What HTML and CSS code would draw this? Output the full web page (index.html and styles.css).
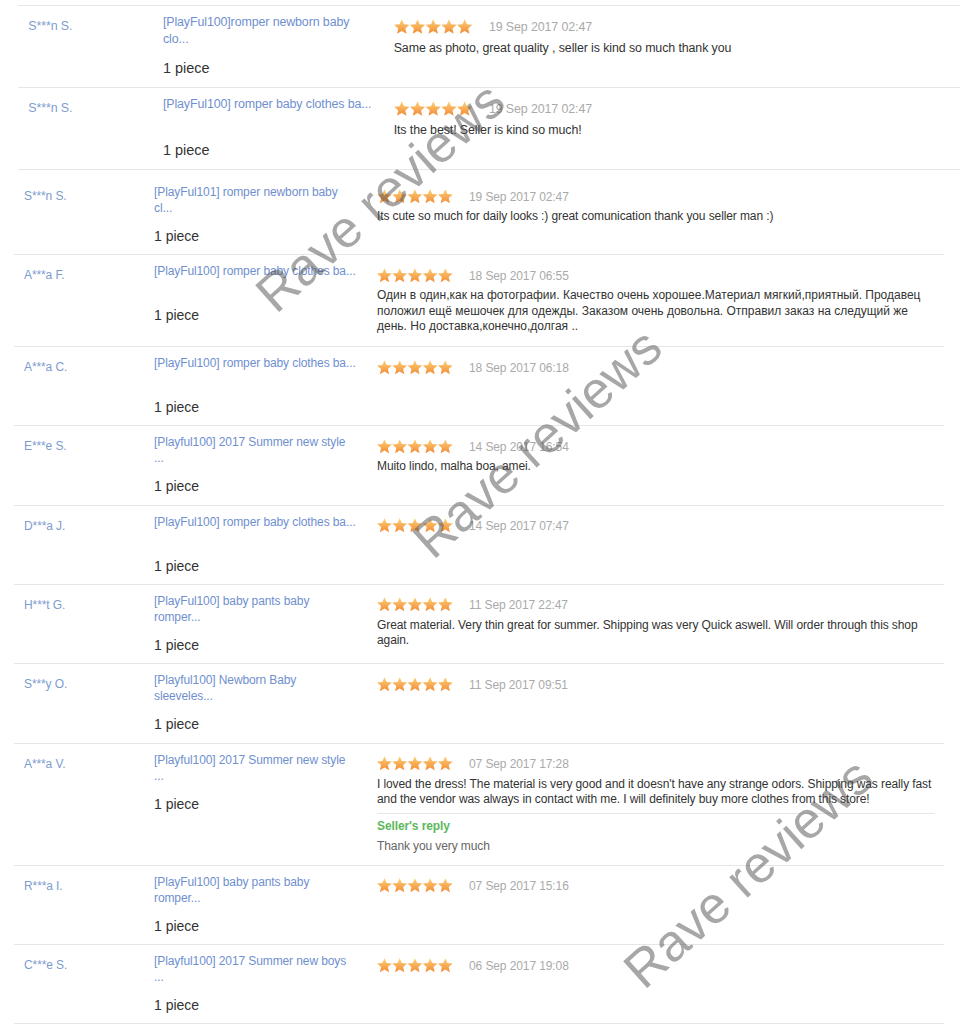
FILE: index.html
```html
<!DOCTYPE html>
<html lang="en">
  <head>
    <meta charset="UTF-8" />
    <title>Feedback</title>
    <link rel="stylesheet" href="styles.css">
  </head>
  <body>
    <svg class="defs" width="0" height="0">
      <defs>
        <linearGradient id="starFill" x1="0" y1="0" x2="0" y2="1">
          <stop offset="0" stop-color="#fdd27a" />
          <stop offset="1" stop-color="#f28b34" />
        </linearGradient>
        <path id="star" d="M7.5 0.2 L9.62 5.09 L14.92 5.59 L10.92 9.11 L12.08 14.31 L7.5 11.6 L2.92 14.31 L4.08 9.11 L0.08 5.59 L5.38 5.09 Z" fill="url(#starFill)" />
        <symbol id="stars5" viewBox="0 0 76 15">
          <use href="#star" x="0" />
          <use href="#star" x="15.2" />
          <use href="#star" x="30.4" />
          <use href="#star" x="45.6" />
          <use href="#star" x="60.8" />
        </symbol>
      </defs>
    </svg>

    <div class="page">
      <!-- first capture -->
      <div class="shot shot--top">
        <div class="feedback feedback--zoomed">
          <div class="fb-row">
            <div class="fb-user">S***n S.</div>
            <div class="fb-order">
              <a class="fb-product" href="#">[PlayFul100]romper newborn baby clo...</a>
              <div class="fb-qty">1 piece</div>
            </div>
            <div class="fb-review">
              <div class="fb-meta">
                <svg class="fb-stars"><use href="#stars5" /></svg>
                <span class="fb-date">19 Sep 2017 02:47</span>
              </div>
              <p class="fb-text">Same as photo, great quality , seller is kind so much thank you</p>
            </div>
          </div>
          <div class="fb-row">
            <div class="fb-user">S***n S.</div>
            <div class="fb-order">
              <a class="fb-product" href="#">[PlayFul100] romper baby clothes ba...</a>
              <div class="fb-qty">1 piece</div>
            </div>
            <div class="fb-review">
              <div class="fb-meta">
                <svg class="fb-stars"><use href="#stars5" /></svg>
                <span class="fb-date">19 Sep 2017 02:47</span>
              </div>
              <p class="fb-text">Its the best! Seller is kind so much!</p>
            </div>
          </div>
        </div>
      </div>

      <!-- second capture -->
      <div class="shot shot--bottom">
        <div class="feedback">
          <div class="fb-row">
            <div class="fb-user">S***n S.</div>
            <div class="fb-order">
              <a class="fb-product" href="#">[PlayFul101] romper newborn baby cl...</a>
              <div class="fb-qty">1 piece</div>
            </div>
            <div class="fb-review">
              <div class="fb-meta">
                <svg class="fb-stars"><use href="#stars5" /></svg>
                <span class="fb-date">19 Sep 2017 02:47</span>
              </div>
              <p class="fb-text">Its cute so much for daily looks :) great comunication thank you seller man :)</p>
            </div>
          </div>
          <div class="fb-row">
            <div class="fb-user">A***a F.</div>
            <div class="fb-order">
              <a class="fb-product" href="#">[PlayFul100] romper baby clothes ba...</a>
              <div class="fb-qty">1 piece</div>
            </div>
            <div class="fb-review">
              <div class="fb-meta">
                <svg class="fb-stars"><use href="#stars5" /></svg>
                <span class="fb-date">18 Sep 2017 06:55</span>
              </div>
              <p class="fb-text" lang="ru">Один в один,как на фотографии. Качество очень хорошее.Материал мягкий,приятный. Продавец положил ещё мешочек для одежды. Заказом очень довольна. Отправил заказ на следущий же день. Но доставка,конечно,долгая ..</p>
            </div>
          </div>
          <div class="fb-row">
            <div class="fb-user">A***a C.</div>
            <div class="fb-order">
              <a class="fb-product" href="#">[PlayFul100] romper baby clothes ba...</a>
              <div class="fb-qty">1 piece</div>
            </div>
            <div class="fb-review">
              <div class="fb-meta">
                <svg class="fb-stars"><use href="#stars5" /></svg>
                <span class="fb-date">18 Sep 2017 06:18</span>
              </div>
            </div>
          </div>
          <div class="fb-row">
            <div class="fb-user">E***e S.</div>
            <div class="fb-order">
              <a class="fb-product" href="#">[Playful100] 2017 Summer new style ...</a>
              <div class="fb-qty">1 piece</div>
            </div>
            <div class="fb-review">
              <div class="fb-meta">
                <svg class="fb-stars"><use href="#stars5" /></svg>
                <span class="fb-date">14 Sep 2017 16:54</span>
              </div>
              <p class="fb-text">Muito lindo, malha boa, amei.</p>
            </div>
          </div>
          <div class="fb-row">
            <div class="fb-user">D***a J.</div>
            <div class="fb-order">
              <a class="fb-product" href="#">[PlayFul100] romper baby clothes ba...</a>
              <div class="fb-qty">1 piece</div>
            </div>
            <div class="fb-review">
              <div class="fb-meta">
                <svg class="fb-stars"><use href="#stars5" /></svg>
                <span class="fb-date">14 Sep 2017 07:47</span>
              </div>
            </div>
          </div>
          <div class="fb-row">
            <div class="fb-user">H***t G.</div>
            <div class="fb-order">
              <a class="fb-product" href="#">[PlayFul100] baby pants baby romper...</a>
              <div class="fb-qty">1 piece</div>
            </div>
            <div class="fb-review">
              <div class="fb-meta">
                <svg class="fb-stars"><use href="#stars5" /></svg>
                <span class="fb-date">11 Sep 2017 22:47</span>
              </div>
              <p class="fb-text">Great material. Very thin great for summer. Shipping was very Quick aswell. Will order through this shop again.</p>
            </div>
          </div>
          <div class="fb-row">
            <div class="fb-user">S***y O.</div>
            <div class="fb-order">
              <a class="fb-product" href="#">[Playful100] Newborn Baby sleeveles...</a>
              <div class="fb-qty">1 piece</div>
            </div>
            <div class="fb-review">
              <div class="fb-meta">
                <svg class="fb-stars"><use href="#stars5" /></svg>
                <span class="fb-date">11 Sep 2017 09:51</span>
              </div>
            </div>
          </div>
          <div class="fb-row">
            <div class="fb-user">A***a V.</div>
            <div class="fb-order">
              <a class="fb-product" href="#">[Playful100] 2017 Summer new style ...</a>
              <div class="fb-qty">1 piece</div>
            </div>
            <div class="fb-review">
              <div class="fb-meta">
                <svg class="fb-stars"><use href="#stars5" /></svg>
                <span class="fb-date">07 Sep 2017 17:28</span>
              </div>
              <p class="fb-text">I loved the dress! The material is very good and it doesn't have any strange odors. Shipping was really fast and the vendor was always in contact with me. I will definitely buy more clothes from this store!</p>
              <div class="fb-reply">
                <div class="fb-reply-title">Seller's reply</div>
                <div class="fb-reply-text">Thank you very much</div>
              </div>
            </div>
          </div>
          <div class="fb-row">
            <div class="fb-user">R***a I.</div>
            <div class="fb-order">
              <a class="fb-product" href="#">[PlayFul100] baby pants baby romper...</a>
              <div class="fb-qty">1 piece</div>
            </div>
            <div class="fb-review">
              <div class="fb-meta">
                <svg class="fb-stars"><use href="#stars5" /></svg>
                <span class="fb-date">07 Sep 2017 15:16</span>
              </div>
            </div>
          </div>
          <div class="fb-row">
            <div class="fb-user">C***e S.</div>
            <div class="fb-order">
              <a class="fb-product" href="#">[Playful100] 2017 Summer new boys ...</a>
              <div class="fb-qty">1 piece</div>
            </div>
            <div class="fb-review">
              <div class="fb-meta">
                <svg class="fb-stars"><use href="#stars5" /></svg>
                <span class="fb-date">06 Sep 2017 19:08</span>
              </div>
            </div>
          </div>
        </div>
      </div>

      <!-- watermark -->
      <span class="watermark" style="left: 380px; top: 197px">Rave reviews</span>
      <span class="watermark" style="left: 537px; top: 443px">Rave reviews</span>
      <span class="watermark" style="left: 748px; top: 873px">Rave reviews</span>
    </div>
  </body>
</html>
```

FILE: styles.css
```css
body {
  margin: 0;
  background: #fff;
  font-family: "Liberation Sans", Arial, sans-serif;
  font-size: 12px;
  letter-spacing: -0.1px;
  color: #333;
  overflow: hidden;
}

.defs {
  position: absolute;
}

.page {
  position: relative;
  width: 960px;
  height: 1035px;
  overflow: hidden;
}

.shot--top {
  padding: 5px 0 0 18px;
}

.shot--bottom {
  padding: 6px 0 0 14px;
}

.feedback {
  width: 930px;
}

.feedback--zoomed {
  zoom: 1.035;
  border-top: 1px solid #e6e6e6;
}

.fb-row {
  display: grid;
  grid-template-columns: 130px 223px 1fr;
  padding: 8px 5px 8.3px 10px;
  border-bottom: 1px solid #e6e6e6;
}

.fb-user {
  padding-top: 4px;
  line-height: 16px;
  color: #7d9ccf;
}

.fb-product {
  display: block;
  width: 204px;
  height: 32px;
  line-height: 16px;
  color: #6f8fcf;
  text-decoration: none;
}

.fb-qty {
  margin-top: 10px;
  font-size: 14px;
  line-height: 20px;
  letter-spacing: 0;
  color: #333;
}

.fb-review {
  padding-bottom: 3px;
}

.fb-meta {
  display: flex;
  align-items: center;
  gap: 16px;
  margin-top: 4px;
  height: 16px;
}

.fb-stars {
  width: 76px;
  height: 15px;
}

.fb-date {
  color: #aaa;
  line-height: 16px;
  padding-top: 1px;
}

.fb-text {
  margin: 5px 0 0;
  line-height: 15.5px;
  color: #333;
}

.fb-text:lang(ru) {
  letter-spacing: 0;
}

.fb-reply {
  margin-top: 5px;
  margin-right: 4px;
  padding-top: 4px;
  border-top: 1px solid #e6e6e6;
}

.fb-reply-title {
  line-height: 16px;
  font-weight: bold;
  color: #5cb85c;
}

.fb-reply-text {
  margin-top: 4px;
  line-height: 16px;
  color: #666;
}

.watermark {
  position: absolute;
  transform: translate(-50%, -50%) rotate(-42deg);
  font-size: 52px;
  letter-spacing: 0;
  white-space: nowrap;
  color: rgba(80, 80, 80, 0.5);
  pointer-events: none;
}
```
